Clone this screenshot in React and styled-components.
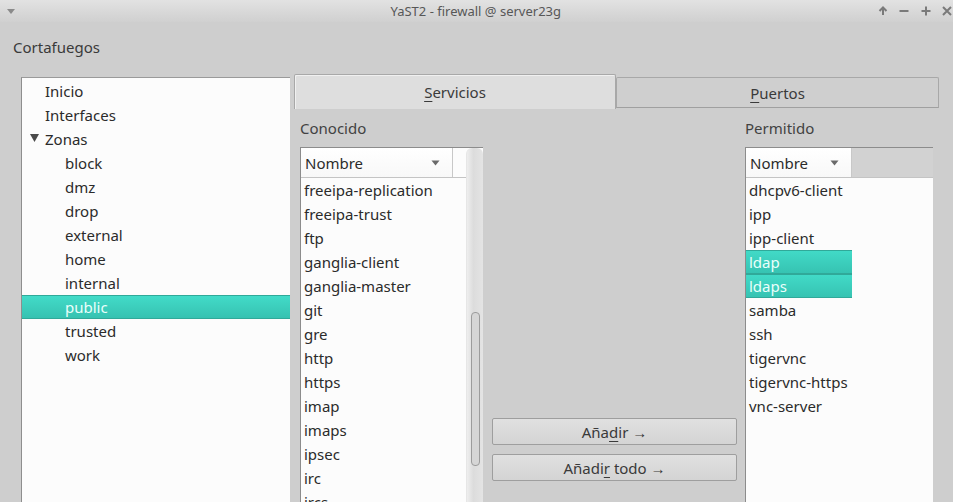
import React from "react";
import styled, { createGlobalStyle } from "styled-components";

const Global = createGlobalStyle`
  html, body {
    margin: 0;
    padding: 0;
    background: #cecece;
    overflow: hidden;
  }
  * {
    box-sizing: border-box;
  }
`;

const zones = ["block", "dmz", "drop", "external", "home", "internal", "public", "trusted", "work"];
const known = [
  "freeipa-replication",
  "freeipa-trust",
  "ftp",
  "ganglia-client",
  "ganglia-master",
  "git",
  "gre",
  "http",
  "https",
  "imap",
  "imaps",
  "ipsec",
  "irc",
  "ircs",
];
const allowed = [
  "dhcpv6-client",
  "ipp",
  "ipp-client",
  "ldap",
  "ldaps",
  "samba",
  "ssh",
  "tigervnc",
  "tigervnc-https",
  "vnc-server",
];
const picked = ["ldap", "ldaps"];

const Caret = () => (
  <svg width="9" height="6" viewBox="0 0 9 6">
    <path d="M0.5 0.5 L8.5 0.5 L4.5 5.5 Z" fill="#6a6a6a" />
  </svg>
);

const App = () => {
  return (
    <Window>
      <Global />
      <TitleBar>
        <MenuCaret>
          <svg width="8" height="5" viewBox="0 0 8 5">
            <path d="M0 0 L8 0 L4 5 Z" fill="#8a8a8a" />
          </svg>
        </MenuCaret>
        <Title>YaST2 - firewall @ server23g</Title>
        <Controls>
          <svg width="10" height="10" viewBox="0 0 10 10">
            <path d="M5 9 V2 M1.5 5 L5 1.5 L8.5 5" stroke="#7a7a7a" strokeWidth="2" fill="none" />
          </svg>
          <svg width="10" height="10" viewBox="0 0 10 10">
            <path d="M0.5 5 H9.5" stroke="#7a7a7a" strokeWidth="2" />
          </svg>
          <svg width="10" height="10" viewBox="0 0 10 10">
            <path d="M0.5 5 H9.5 M5 0.5 V9.5" stroke="#7a7a7a" strokeWidth="2" />
          </svg>
          <svg width="10" height="10" viewBox="0 0 10 10">
            <path d="M1 1 L9 9 M9 1 L1 9" stroke="#7a7a7a" strokeWidth="2" />
          </svg>
        </Controls>
      </TitleBar>

      <Heading>Cortafuegos</Heading>

      <Body>
        <Tree>
          <TreeRow $indent={45}>Inicio</TreeRow>
          <TreeRow $indent={45}>Interfaces</TreeRow>
          <TreeRow $indent={45}>
            <Expander>
              <svg width="9" height="8" viewBox="0 0 9 8">
                <path d="M0 0 L9 0 L4.5 8 Z" fill="#4a4a4a" />
              </svg>
            </Expander>
            Zonas
          </TreeRow>
          {zones.map((z) => (
            <TreeRow key={z} $indent={65} $selected={z === "public"}>
              {z}
            </TreeRow>
          ))}
        </Tree>

        <Pane>
          <TabBar>
            <Tab $active>
              <span>
                <u>S</u>ervicios
              </span>
            </Tab>
            <Tab>
              <span>
                <u>P</u>uertos
              </span>
            </Tab>
          </TabBar>

          <Columns>
            <Column>
              <Label>Conocido</Label>
              <ListBox>
                <Viewport>
                  <HeaderRow>
                    <HeaderCell $width={152}>
                      Nombre
                      <Caret />
                    </HeaderCell>
                  </HeaderRow>
                  {known.map((k) => (
                    <Row key={k}>{k}</Row>
                  ))}
                </Viewport>
                <ScrollTrack>
                  <Thumb />
                </ScrollTrack>
              </ListBox>
            </Column>

            <Middle>
              <Button>
                <span>
                  Aña<u>d</u>ir →
                </span>
              </Button>
              <Button>
                <span>
                  Añadi<u>r</u> todo →
                </span>
              </Button>
            </Middle>

            <Column>
              <Label>Permitido</Label>
              <ListBox>
                <Viewport>
                  <HeaderRow $gray>
                    <HeaderCell $width={106}>
                      Nombre
                      <Caret />
                    </HeaderCell>
                  </HeaderRow>
                  {allowed.map((a) => (
                    <Row key={a} $width={106} $selected={picked.includes(a)}>
                      {a}
                    </Row>
                  ))}
                </Viewport>
              </ListBox>
            </Column>
          </Columns>
        </Pane>
      </Body>
    </Window>
  );
};

export default App;

const Window = styled.div`
  width: 953px;
  height: 502px;
  overflow: hidden;
  display: flex;
  flex-direction: column;
  font-family: "Noto Sans", "Open Sans", sans-serif;
  font-size: 15px;
  color: #2b2b2b;
  background: #cecece;
`;

const TitleBar = styled.div`
  height: 22px;
  flex-shrink: 0;
  display: flex;
  align-items: center;
  background: linear-gradient(#e2e2e2, #d0d0d0);
`;

const MenuCaret = styled.div`
  width: 22px;
  display: flex;
  justify-content: center;
  padding-top: 1px;
`;

const Title = styled.div`
  flex: 1;
  text-align: center;
  font-size: 13px;
  color: #575757;
  padding-left: 52px;
`;

const Controls = styled.div`
  display: flex;
  align-items: center;
  gap: 11.5px;
  padding-right: 1px;
`;

const Heading = styled.div`
  height: 24px;
  line-height: 24px;
  margin: 13px 0 15px 13px;
  color: #3a3a3a;
`;

const Body = styled.div`
  flex: 1;
  display: flex;
  align-items: flex-start;
  padding-left: 21px;
  gap: 4px;
`;

const Tree = styled.div`
  width: 269px;
  height: 430px;
  margin-top: 3px;
  padding-top: 1px;
  background: #fcfcfc;
  border-left: 1px solid #8e8e8e;
  border-top: 1px solid #9a9a9a;
`;

const TreeRow = styled.div`
  height: 24px;
  line-height: 22px;
  padding-left: ${(p) => p.$indent - 22}px;
  position: relative;
  color: ${(p) => (p.$selected ? "#eafffb" : "#2b2b2b")};
  background: ${(p) => (p.$selected ? "linear-gradient(#42dbc8, #36c2b1)" : "transparent")};
  border-top: 1px solid ${(p) => (p.$selected ? "#30a999" : "transparent")};
  border-bottom: 1px solid ${(p) => (p.$selected ? "#30a999" : "transparent")};
`;

const Expander = styled.span`
  position: absolute;
  left: 8px;
  top: 6px;
  display: flex;
`;

const Pane = styled.div`
  width: 646px;
  display: flex;
  flex-direction: column;
`;

const TabBar = styled.div`
  display: flex;
  align-items: flex-end;
  height: 35px;
`;

const Tab = styled.div`
  width: ${(p) => (p.$active ? "322px" : "323px")};
  height: ${(p) => (p.$active ? "35px" : "31px")};
  margin-bottom: ${(p) => (p.$active ? "0" : "1px")};
  display: flex;
  align-items: center;
  justify-content: center;
  color: #3a3a3a;
  background: ${(p) => (p.$active ? "#dedede" : "#cfcfcf")};
  border: 1px solid #a8a8a8;
  border-bottom: ${(p) => (p.$active ? "none" : "1px solid #a0a0a0")};
  border-radius: 2px 2px 0 0;
  box-shadow: ${(p) => (p.$active ? "inset 1px 1px 0 #f0f0f0" : "none")};
  u {
    text-underline-offset: 3px;
  }
`;

const Columns = styled.div`
  display: grid;
  grid-template-columns: 183px 245px 187px;
  column-gap: 9px;
  padding-left: 6px;
  margin-top: 9px;
  & > :last-child {
    margin-left: -1px;
  }
`;

const Column = styled.div`
  display: flex;
  flex-direction: column;
`;

const Label = styled.div`
  height: 20px;
  line-height: 20px;
  margin-bottom: 9px;
  color: #424242;
`;

const ListBox = styled.div`
  height: 360px;
  display: flex;
  background: #fcfcfc;
  border-top: 1px solid #8c8c8c;
  border-left: 1px solid #8c8c8c;
`;

const Viewport = styled.div`
  flex: 1;
  overflow: hidden;
`;

const HeaderRow = styled.div`
  height: 30px;
  display: flex;
  background: ${(p) => (p.$gray ? "#d2d2d2" : "#fcfcfc")};
  border-bottom: 1px solid #c4c4c4;
`;

const HeaderCell = styled.div`
  width: ${(p) => p.$width}px;
  height: 100%;
  display: flex;
  align-items: center;
  justify-content: space-between;
  padding: 1px 12px 0 4px;
  background: linear-gradient(#ffffff, #f8f8f8);
  border-right: 1px solid #c8c8c8;
  color: #2b2b2b;
`;

const Row = styled.div`
  height: 24px;
  line-height: 24px;
  padding-left: 3px;
  white-space: nowrap;
  width: ${(p) => (p.$width ? `${p.$width}px` : "auto")};
  color: ${(p) => (p.$selected ? "#eafffb" : "#2b2b2b")};
  background: ${(p) => (p.$selected ? "linear-gradient(#42dbc8, #36c2b1)" : "transparent")};
  box-shadow: ${(p) => (p.$selected ? "inset 0 -1px 0 #30a999, inset 0 1px 0 #30a999" : "none")};
`;

const ScrollTrack = styled.div`
  width: 17px;
  position: relative;
  background: linear-gradient(90deg, #eeeeee, #dcdcdc 40%, #e4e4e4);
  border-left: 1px solid #e6e6e6;
  border-radius: 6px 6px 0 0;
`;

const Thumb = styled.div`
  position: absolute;
  left: 4px;
  top: 164px;
  width: 9px;
  height: 154px;
  border: 1px solid #9c9c9c;
  border-radius: 4px;
  background: #d6d6d6;
`;

const Middle = styled.div`
  display: flex;
  flex-direction: column;
  gap: 9px;
  padding-top: 300px;
`;

const Button = styled.div`
  height: 27px;
  display: flex;
  align-items: center;
  justify-content: center;
  color: #3a3a3a;
  background: linear-gradient(#e0e0e0, #d4d4d4);
  border: 1px solid #9e9e9e;
  border-radius: 2px;
  u {
    text-underline-offset: 3px;
  }
`;
